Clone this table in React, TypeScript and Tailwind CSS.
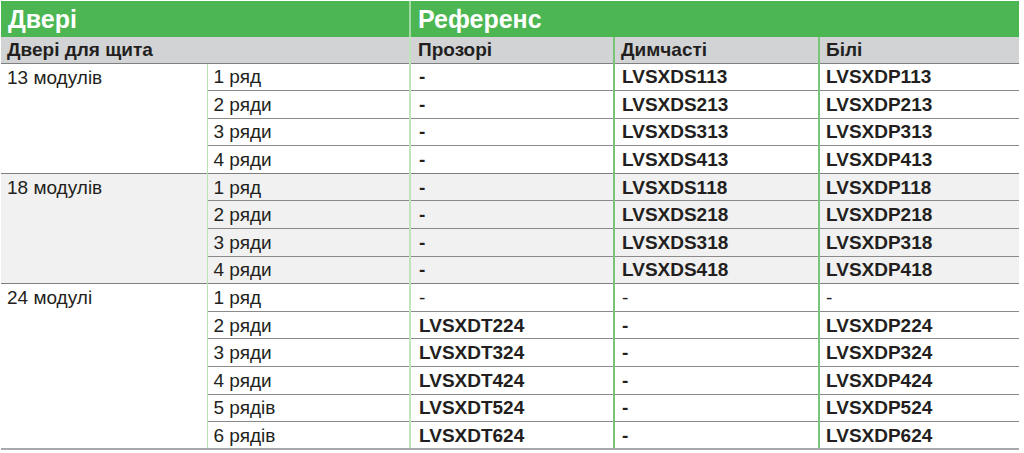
import React from "react";

type Row = { rows: string; clear: string; smoke: string; white: string; boldClear?: boolean };
type Group = { label: string; bg: string; items: Row[] };

const groups: Group[] = [
  {
    label: "13 модулів",
    bg: "bg-white",
    items: [
      { rows: "1 ряд", clear: "-", smoke: "LVSXDS113", white: "LVSXDP113" },
      { rows: "2 ряди", clear: "-", smoke: "LVSXDS213", white: "LVSXDP213" },
      { rows: "3 ряди", clear: "-", smoke: "LVSXDS313", white: "LVSXDP313" },
      { rows: "4 ряди", clear: "-", smoke: "LVSXDS413", white: "LVSXDP413" },
    ],
  },
  {
    label: "18 модулів",
    bg: "bg-[#f1f1f1]",
    items: [
      { rows: "1 ряд", clear: "-", smoke: "LVSXDS118", white: "LVSXDP118" },
      { rows: "2 ряди", clear: "-", smoke: "LVSXDS218", white: "LVSXDP218" },
      { rows: "3 ряди", clear: "-", smoke: "LVSXDS318", white: "LVSXDP318" },
      { rows: "4 ряди", clear: "-", smoke: "LVSXDS418", white: "LVSXDP418" },
    ],
  },
  {
    label: "24 модулі",
    bg: "bg-white",
    items: [
      { rows: "1 ряд", clear: "-", smoke: "-", white: "-" },
      { rows: "2 ряди", clear: "LVSXDT224", smoke: "-", white: "LVSXDP224" },
      { rows: "3 ряди", clear: "LVSXDT324", smoke: "-", white: "LVSXDP324" },
      { rows: "4 ряди", clear: "LVSXDT424", smoke: "-", white: "LVSXDP424" },
      { rows: "5 рядів", clear: "LVSXDT524", smoke: "-", white: "LVSXDP524" },
      { rows: "6 рядів", clear: "LVSXDT624", smoke: "-", white: "LVSXDP624" },
    ],
  },
];

export default function App() {
  return (
    <div className="w-[1024px] h-[453px] bg-white pl-[1px] pt-[1px] font-['Liberation_Sans',Arial,sans-serif] text-[#231f20]">
      <table className="table-fixed border-collapse w-[1018px]">
        <colgroup>
          <col className="w-[206px]" />
          <col className="w-[203px]" />
          <col className="w-[204px]" />
          <col className="w-[205px]" />
          <col className="w-[200px]" />
        </colgroup>
        <thead>
          <tr className="h-[36px] bg-[#4bb652] text-white text-[25px] font-bold">
            <th colSpan={2} className="text-left pl-[7px] p-0 leading-none">Двері</th>
            <th colSpan={3} className="text-left pl-[7px] p-0 leading-none border-l-2 border-l-[#a3d9a3]">Референс</th>
          </tr>
          <tr className="h-[26px] bg-[#d1d3d4] text-[19px] font-bold">
            <th colSpan={2} className="text-left pl-[6px] p-0 leading-none">Двері для щита</th>
            <th className="text-left pl-[7px] p-0 leading-none border-l-2 border-l-[#bfe4bc]">Прозорі</th>
            <th className="text-left pl-[6px] p-0 leading-none border-l-2 border-l-[#78c47a]">Димчасті</th>
            <th className="text-left pl-[6px] p-0 leading-none border-l-2 border-l-[#78c47a]">Білі</th>
          </tr>
        </thead>
        <tbody className="text-[19px]">
          {groups.map((g, gi) =>
            g.items.map((r, ri) => {
              const last = gi === groups.length - 1 && ri === g.items.length - 1;
              const top = ri === 0 ? "border-t border-t-[#7f7f7f]" : "border-t border-t-[#8a8a8a]";
              const bottom = last ? "border-b-2 border-b-[#a7a9ac]" : "";
              const plain = r.smoke === "-" && r.white === "-" && r.clear === "-";
              return (
                <tr key={gi + "-" + ri} className={`h-[27.6px] ${g.bg}`}>
                  {ri === 0 && (
                    <td
                      rowSpan={g.items.length}
                      className={`align-top pl-[6px] p-0 leading-[27px] border-t border-t-[#7f7f7f] ${gi === groups.length - 1 ? "border-b-2 border-b-[#a7a9ac]" : ""}`}
                    >
                      {g.label}
                    </td>
                  )}
                  <td className={`pl-[6px] p-0 leading-none border-l border-l-[#b9e3b6] ${top} ${bottom}`}>{r.rows}</td>
                  <td className={`pl-[8px] p-0 leading-none border-l-2 border-l-[#bfe4bc] ${plain ? "font-normal" : "font-bold"} ${top} ${bottom}`}>{r.clear}</td>
                  <td className={`pl-[7px] p-0 leading-none border-l-2 border-l-[#78c47a] ${plain ? "font-normal" : "font-bold"} ${top} ${bottom}`}>{r.smoke}</td>
                  <td className={`pl-[6px] p-0 leading-none border-l-2 border-l-[#78c47a] ${plain ? "font-normal" : "font-bold"} ${top} ${bottom}`}>{r.white}</td>
                </tr>
              );
            })
          )}
        </tbody>
      </table>
    </div>
  );
}
